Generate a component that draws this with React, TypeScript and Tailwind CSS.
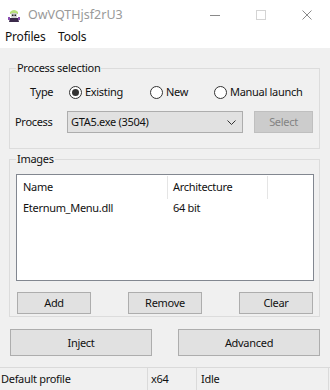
import React from 'react';

// small radio button like the win10 one
function Radio({ checked, label, width }: { checked?: boolean; label: string; width: string }) {
  return (
    <div className={`flex items-center ${width}`}>
      <div className="w-[13px] h-[13px] rounded-full border border-[#333] bg-white flex items-center justify-center">
        {checked && <div className="w-[7px] h-[7px] rounded-full bg-[#333]"></div>}
      </div>
      <span className="ml-[3px]">{label}</span>
    </div>
  );
}

function Btn({ children, className }: { children: React.ReactNode; className: string }) {
  return (
    <div className={`bg-[#e1e1e1] border border-[#adadad] flex items-center justify-center ${className}`}>
      {children}
    </div>
  );
}

export default function App() {
  return (
    <div className="w-[330px] h-[390px] bg-[#f0f0f0] flex flex-col text-[11px] tracking-[-0.3px] leading-[14px] text-[#111] overflow-hidden [font-family:'Noto_Sans',sans-serif]">
      {/* Title bar */}
      <div className="h-[30px] bg-white flex items-center shrink-0">
        <svg className="ml-[7px]" width="14" height="14" viewBox="0 0 14 14">
          <path d="M3 4 Q7 0 11 4 L11 6 L3 6 Z" fill="#b7e07a" />
          <rect x="4" y="5" width="6" height="5" rx="1" fill="#cfcfcf" />
          <rect x="5" y="6.5" width="1.5" height="1.5" fill="#222" />
          <rect x="7.5" y="6.5" width="1.5" height="1.5" fill="#222" />
          <path d="M3 10 L11 10 L12 14 L2 14 Z" fill="#3a2a4a" />
          <rect x="1" y="9" width="2" height="3" fill="#8a4fb0" />
          <rect x="11" y="9" width="2" height="3" fill="#8a4fb0" />
        </svg>
        <span className="ml-[7px] text-[#999999] text-[12.5px] tracking-normal">OwVQTHjsf2rU3</span>
        <div className="ml-auto flex h-full">
          <div className="w-[46px] flex items-center justify-center">
            <div className="w-[10px] h-px bg-[#8a8a8a]"></div>
          </div>
          <div className="w-[46px] flex items-center justify-center">
            <div className="w-[10px] h-[10px] border border-[#d4d4d4]"></div>
          </div>
          <div className="w-[46px] flex items-center justify-center">
            <svg width="10" height="10" viewBox="0 0 10 10">
              <path d="M0.5 0.5 L9.5 9.5 M9.5 0.5 L0.5 9.5" stroke="#8a8a8a" strokeWidth="1" />
            </svg>
          </div>
        </div>
      </div>

      {/* Menu bar */}
      <div className="h-[18px] bg-white flex items-start pl-[5px] shrink-0 text-[12px] tracking-[-0.2px]">
        <span className="w-[53px]">Profiles</span>
        <span>Tools</span>
      </div>

      <div className="pl-[9px] pr-[10px]">
        {/* Process selection */}
        <fieldset className="mt-[13px] border border-[#dcdcdc] p-0 m-0">
          <legend className="ml-[6px] px-[1px] leading-[14px]">Process selection</legend>
          <div className="pb-[15px]">
            <div className="mt-[10px] flex items-center h-[14px] pl-[20px]">
              <span className="w-[39px]">Type</span>
              <Radio checked label="Existing" width="w-[81px]" />
              <Radio label="New" width="w-[64px]" />
              <Radio label="Manual launch" width="" />
            </div>
            <div className="mt-[12px] flex items-center h-[22px] pl-[5px]">
              <span className="w-[52px]">Process</span>
              <div className="w-[176px] h-[22px] bg-[#e1e1e1] border border-[#adadad] flex items-center pl-[3px] pr-[6px]">
                <span>GTA5.exe (3504)</span>
                <svg className="ml-auto" width="9" height="5" viewBox="0 0 9 5">
                  <path d="M0.5 0.5 L4.5 4.5 L8.5 0.5" stroke="#333" strokeWidth="1" fill="none" />
                </svg>
              </div>
              <div className="ml-[11px] w-[59px] h-[22px] bg-[#cccccc] border border-[#bfbfbf] text-[#838383] flex items-center justify-center">
                Select
              </div>
            </div>
          </div>
        </fieldset>

        {/* Images */}
        <fieldset className="mt-[3px] border border-[#dcdcdc] p-0 m-0">
          <legend className="ml-[6px] px-[1px] leading-[14px]">Images</legend>
          <div className="pl-[6px] pr-[5px] pb-[2px]">
            <div className="mt-[8px] h-[107px] bg-white border border-[#828790]">
              <div className="flex h-[24px] items-center">
                <div className="w-[150px] pl-[6px]">Name</div>
                <div className="w-px h-[23px] self-end bg-[#e5e5e5]"></div>
                <div className="w-[99px] pl-[5px]">Architecture</div>
                <div className="w-px h-[23px] self-end bg-[#e5e5e5]"></div>
              </div>
              <div className="flex h-[17px] items-center">
                <div className="w-[151px] pl-[6px]">Eternum_Menu.dll</div>
                <div className="pl-[5px]">64 bit</div>
              </div>
            </div>
            <div className="mt-[11px] flex justify-between px-[1px]">
              <Btn className="w-[74px] h-[22px]">Add</Btn>
              <Btn className="w-[74px] h-[22px]">Remove</Btn>
              <Btn className="w-[74px] h-[22px]">Clear</Btn>
            </div>
          </div>
        </fieldset>

        <div className="mt-[12px] flex justify-between pl-[1px]">
          <Btn className="w-[142px] h-[27px]">Inject</Btn>
          <Btn className="w-[142px] h-[27px]">Advanced</Btn>
        </div>
      </div>

      {/* Status bar */}
      <div className="mt-auto h-[23px] border-t border-[#dadada] flex items-center shrink-0">
        <div className="w-[148px] h-full flex items-center pl-[1px] border-r border-[#dadada]">Default profile</div>
        <div className="w-[49px] h-full flex items-center pl-[3px] border-r border-[#dadada]">x64</div>
        <div className="w-[132px] h-full flex items-center pl-[4px] border-r border-[#dadada]">Idle</div>
      </div>
    </div>
  );
}
